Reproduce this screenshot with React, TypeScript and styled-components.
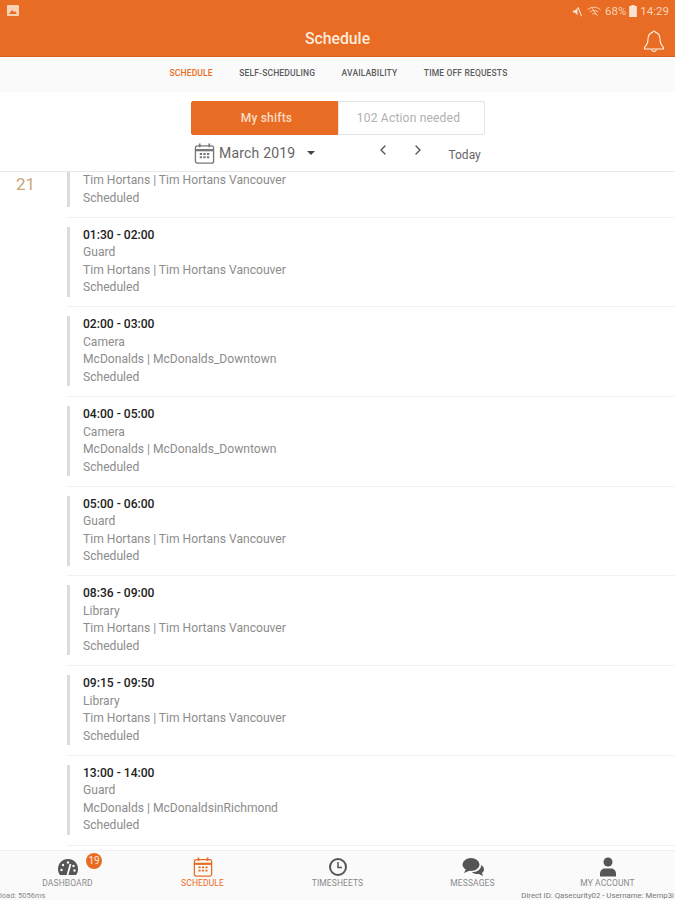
import * as React from 'react';
import styled, { createGlobalStyle } from 'styled-components';
import { ChevronLeft, ChevronRight } from 'lucide-react';

const orange = '#e86c23';

const GlobalStyle = createGlobalStyle`
  html, body {
    margin: 0;
    padding: 0;
    background: #fff;
    font-family: Roboto, "Liberation Sans", sans-serif;
  }
`;

const Page = styled.div`
  display: flex;
  flex-flow: column;
  width: 675px;
  height: 900px;
  overflow: hidden;
  background: #fff;
`;

const StatusBar = styled.div`
  display: flex;
  align-items: center;
  justify-content: space-between;
  height: 22px;
  padding: 0 6px 0 7px;
  background: ${orange};
  color: #f8d2b6;
  font-size: 11.5px;
`;

const StatusRight = styled.div`
  display: flex;
  align-items: center;
  gap: 3px;
`;

const Header = styled.header`
  display: flex;
  align-items: center;
  justify-content: center;
  position: relative;
  height: 35px;
  padding-bottom: 2px;
  box-sizing: border-box;
  background: ${orange};
  border-bottom: 1px solid #d65f19;
  color: #fdeadc;
  font-size: 15.8px;
  font-weight: 500;
`;

const Bell = styled.svg`
  position: absolute;
  right: 10px;
  top: 7px;
`;

const SubNav = styled.nav`
  display: flex;
  justify-content: center;
  gap: 26.500px;
  height: 35px;
  padding: 0 0 4px 2px;
  box-sizing: border-box;
  align-items: center;
  background: #fafafa;
`;

const SubNavItem = styled.span<{ $active?: boolean }>`
  color: ${p => (p.$active ? orange : '#5c5c5c')};
  font-size: 8.5px;
  font-weight: 500;
  letter-spacing: 0.15px;
`;

const Segments = styled.div`
  display: flex;
  align-self: center;
  width: 294px;
  height: 34px;
  margin: 9px 0 0 1px;
`;

const Segment = styled.div<{ $active?: boolean }>`
  display: flex;
  align-items: center;
  justify-content: center;
  flex: ${p => (p.$active ? '0 0 147px' : 1)};
  box-sizing: border-box;
  padding: ${p => (p.$active ? '0 0 0 4px' : '0 6px 0 0')};
  border: 1px solid ${p => (p.$active ? orange : '#e2e2e2')};
  border-radius: ${p => (p.$active ? '2px 0 0 2px' : '0 2px 2px 0')};
  background: ${p => (p.$active ? orange : '#fff')};
  color: ${p => (p.$active ? '#fbdcc4' : '#b0b0b0')};
  font-size: 12px;
  font-weight: ${p => (p.$active ? 500 : 400)};
  letter-spacing: 0.2px;
`;

const DateBar = styled.div`
  display: flex;
  align-items: center;
  height: 36px;
  padding-left: 194px;
  border-bottom: 1px solid #e8e8e8;
  color: #666;
`;

const Month = styled.span`
  margin-left: 4px;
  font-size: 14px;
  letter-spacing: 0.2px;
`;

const Caret = styled.span`
  width: 0;
  height: 0;
  margin-left: 12px;
  border-left: 4px solid transparent;
  border-right: 4px solid transparent;
  border-top: 4px solid #444;
`;

const Arrows = styled.div`
  display: flex;
  gap: 19px;
  margin-left: 60px;
  margin-top: -7px;
  color: #555;
`;

const Today = styled.span`
  margin-left: 22px;
  margin-top: 3px;
  font-size: 12px;
`;

const ListArea = styled.main`
  display: flex;
  flex: 1;
  min-height: 0;
  overflow: hidden;
`;

const DayNumber = styled.div`
  width: 67px;
  box-sizing: border-box;
  padding: 2px 0 0 16px;
  color: #c6a777;
  font-size: 17px;
`;

const Shifts = styled.div`
  flex: 1;
`;

const Shift = styled.div<{ $clipped?: boolean }>`
  padding: ${p => (p.$clipped ? '0 0 9.700px' : '9px 0 9.700px')};
  border-bottom: 1px solid #f1f1f1;
`;

const ShiftBody = styled.div`
  display: flex;
  flex-flow: column;
  justify-content: flex-end;
  box-sizing: border-box;
  border-left: 3px solid #dcdcdc;
  padding-left: 13px;
  color: #8c8c8c;
  font-size: 12.100px;
  line-height: 17.500px;
`;

const Time = styled.div`
  color: #222;
  font-weight: 500;
`;

const Footer = styled.footer`
  display: grid;
  grid-template-columns: repeat(5, 135px);
  position: relative;
  height: 49px;
  background: #fafafa;
  border-top: 1px solid #f0f0f0;
`;

const Tab = styled.div`
  display: flex;
  flex-flow: column;
  align-items: center;
  position: relative;
  padding-top: 6px;
`;

const TabIcon = styled.div`
  display: flex;
  align-items: center;
  height: 20px;
`;

const TabLabel = styled.span<{ $active?: boolean }>`
  margin-top: 1px;
  color: ${p => (p.$active ? orange : '#8a8a8a')};
  font-size: 8.5px;
  letter-spacing: 0.1px;
`;

const Badge = styled.span`
  position: absolute;
  top: 2px;
  left: 86px;
  width: 16px;
  height: 16px;
  border-radius: 50%;
  background: ${orange};
  color: #fde8d8;
  font-size: 10px;
  line-height: 16px;
  text-align: center;
`;

const DebugLeft = styled.span`
  position: absolute;
  left: 0;
  bottom: 0;
  color: #888;
  font-size: 7.500px;
`;

const DebugRight = styled.span`
  position: absolute;
  right: 1px;
  bottom: 0;
  color: #777;
  font-size: 7.800px;
  white-space: nowrap;
`;

const shifts = [
  { time: '01:30 - 02:00', role: 'Guard', place: 'Tim Hortans | Tim Hortans Vancouver' },
  { time: '02:00 - 03:00', role: 'Camera', place: 'McDonalds | McDonalds_Downtown' },
  { time: '04:00 - 05:00', role: 'Camera', place: 'McDonalds | McDonalds_Downtown' },
  { time: '05:00 - 06:00', role: 'Guard', place: 'Tim Hortans | Tim Hortans Vancouver' },
  { time: '08:36 - 09:00', role: 'Library', place: 'Tim Hortans | Tim Hortans Vancouver' },
  { time: '09:15 - 09:50', role: 'Library', place: 'Tim Hortans | Tim Hortans Vancouver' },
  { time: '13:00 - 14:00', role: 'Guard', place: 'McDonalds | McDonaldsinRichmond' },
];

const CalendarIcon = ({ size, color }: { size: number; color: string }) => (
  <svg width={size} height={size} viewBox="0 0 22 22" fill="none" stroke={color}>
    <rect x="1.500" y="3" width="19" height="18" rx="2" strokeWidth="1.400" />
    <path d="M1.500 7.500h19" strokeWidth="2.400" />
    <path d="M6 0.500v4M16 0.500v4" strokeWidth="1.800" />
    <path d="M6 11.500h2.400M9.800 11.500h2.400M13.600 11.500h2.400M6 15h2.400M9.800 15h2.400M13.600 15h2.400" strokeWidth="2" />
  </svg>
);

export default function App() {
  return (
    <Page>
      <GlobalStyle />
      <StatusBar>
        <svg width="12" height="12" viewBox="0 0 12 12">
          <rect width="12" height="11" rx="1" fill="#f8d2b6" />
          <path d="M2 9l3-4 2 2 1-1 2 3z" fill={orange} />
        </svg>
        <StatusRight>
          <svg width="11" height="11" viewBox="0 0 12 12" fill="#fbe3d3">
            <path d="M1 5h2l3-3v8L3 7H1zM7 1l4 10-1 .5L6 1.500z" />
          </svg>
          <svg width="16" height="11" viewBox="0 0 16 12" fill="none" stroke="#f8d2b6" strokeWidth="1">
            <path d="M1 4c4-3.500 10-3.500 14 0M3.500 6.500c2.500-2 6.500-2 9 0M6 9c1-1 3-1 4 0M5 1l7 10" />
          </svg>
          <span>68%</span>
          <svg width="8" height="12" viewBox="0 0 7 11">
            <path d="M2 0h3v1h2v10H0V1h2z" fill="#fbe3d3" />
          </svg>
          <span>14:29</span>
        </StatusRight>
      </StatusBar>
      <Header>
        Schedule
        <Bell width="22" height="24" viewBox="0 0 22 24" fill="none" stroke="#fdf0e6" strokeWidth="1.100">
          <path d="M11 2c-1 0-1.500.6-1.500 1.400C6.500 4.300 5 7 5 10c0 4-1 6-3.500 8.500v1.500h19v-1.500C18 16 17 14 17 10c0-3-1.500-5.700-4.500-6.600C12.500 2.600 12 2 11 2z" />
          <path d="M8.500 20.500c.4 1.300 1.300 2 2.500 2s2.100-.7 2.500-2" />
        </Bell>
      </Header>
      <SubNav>
        <SubNavItem $active>SCHEDULE</SubNavItem>
        <SubNavItem>SELF-SCHEDULING</SubNavItem>
        <SubNavItem>AVAILABILITY</SubNavItem>
        <SubNavItem>TIME OFF REQUESTS</SubNavItem>
      </SubNav>
      <Segments>
        <Segment $active>My shifts</Segment>
        <Segment>102 Action needed</Segment>
      </Segments>
      <DateBar>
        <CalendarIcon size={21} color="#777" />
        <Month>March 2019</Month>
        <Caret />
        <Arrows>
          <ChevronLeft size={16} />
          <ChevronRight size={16} />
        </Arrows>
        <Today>Today</Today>
      </DateBar>
      <ListArea>
        <DayNumber>21</DayNumber>
        <Shifts>
          <Shift $clipped>
            <ShiftBody>
              <div>Tim Hortans | Tim Hortans Vancouver</div>
              <div>Scheduled</div>
            </ShiftBody>
          </Shift>
          {shifts.map(s => (
            <Shift key={s.time}>
              <ShiftBody>
                <Time>{s.time}</Time>
                <div>{s.role}</div>
                <div>{s.place}</div>
                <div>Scheduled</div>
              </ShiftBody>
            </Shift>
          ))}
        </Shifts>
      </ListArea>
      <Footer>
        <Tab>
          <TabIcon>
            <svg width="22" height="20" viewBox="0 0 22 20" fill="#555">
              <path d="M11 2C5 2 1 6.500 1 12c0 2.500.8 4.500 2 6h16c1.200-1.500 2-3.500 2-6 0-5.500-4-10-10-10z" />
              <path d="M10.500 18l3-11" stroke="#fafafa" strokeWidth="1.800" />
              <circle cx="11" cy="5.500" r="1.200" fill="#fafafa" />
              <circle cx="6" cy="8" r="1.200" fill="#fafafa" />
              <circle cx="16.500" cy="9" r="1.200" fill="#fafafa" />
              <circle cx="4.500" cy="13" r="1.200" fill="#fafafa" />
              <circle cx="17.500" cy="13.500" r="1.200" fill="#fafafa" />
            </svg>
          </TabIcon>
          <TabLabel>DASHBOARD</TabLabel>
          <Badge>19</Badge>
        </Tab>
        <Tab>
          <TabIcon>
            <CalendarIcon size={20} color={orange} />
          </TabIcon>
          <TabLabel $active>SCHEDULE</TabLabel>
        </Tab>
        <Tab>
          <TabIcon>
            <svg width="20" height="20" viewBox="0 0 20 20" fill="none" stroke="#555" strokeWidth="2">
              <circle cx="10" cy="10" r="8" />
              <path d="M10 5v5.500h4" strokeWidth="1.500" />
            </svg>
          </TabIcon>
          <TabLabel>TIMESHEETS</TabLabel>
        </Tab>
        <Tab>
          <TabIcon>
            <svg width="22" height="20" viewBox="0 0 22 20" fill="#555">
              <ellipse cx="9" cy="7.500" rx="8.500" ry="6.500" />
              <path d="M4 12l-2 4 6-2.500z" />
              <path d="M19 8c2 1.200 3 2.800 3 4.500 0 1.500-.8 2.700-2 3.500l1 3-4-2c-3 .4-5.500-.4-7-2 5 .3 9.500-2.500 9-7z" />
            </svg>
          </TabIcon>
          <TabLabel>MESSAGES</TabLabel>
        </Tab>
        <Tab>
          <TabIcon>
            <svg width="18" height="20" viewBox="0 0 18 20" fill="#555">
              <circle cx="9" cy="5" r="4.500" />
              <path d="M1 19.500v-3c0-3 2.500-5 5-5h6c2.500 0 5 2 5 5v3z" />
            </svg>
          </TabIcon>
          <TabLabel>MY ACCOUNT</TabLabel>
        </Tab>
        <DebugLeft>load: 5056ms</DebugLeft>
        <DebugRight>Direct ID: Qasecurity02 - Username: Memp3i</DebugRight>
      </Footer>
    </Page>
  );
}
